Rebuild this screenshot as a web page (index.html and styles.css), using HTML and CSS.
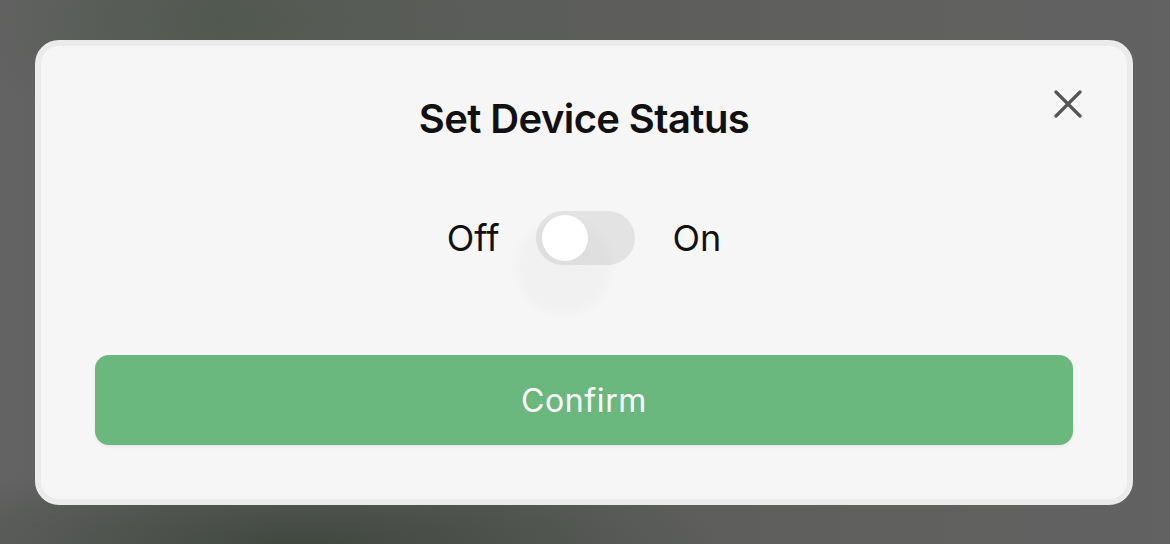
FILE: index.html
```html
<!DOCTYPE html>
<html>
<head lang="en">
    <meta charset="UTF-8">
    <title>Set Device Status</title>
    <link rel="stylesheet" href="styles.css">
</head>
<body>
<div id="backdrop">
    <div id="dialog">
        <span id="close">
            <svg width="28" height="28" viewBox="0 0 28 28">
                <path d="M2 2 L26 26 M26 2 L2 26" stroke="#555555" stroke-width="3.2" stroke-linecap="round" fill="none"/>
            </svg>
        </span>
        <h1 class="title">Set Device Status</h1>
        <div class="switch-row">
            <span class="label">Off</span>
            <span class="switch"><span class="knob"></span></span>
            <span class="label">On</span>
        </div>
        <a class="btn" href="#">Confirm</a>
    </div>
</div>
</body>
</html>
```

FILE: styles.css
```css
*{
    margin: 0;
    padding: 0;
    box-sizing: border-box;
}
a{
    text-decoration: none;
}
html,body{
    width: 1170px;
    height: 544px;
    overflow: hidden;
}
body{
    font-family: Inter, "Liberation Sans", sans-serif;
    background: #5f5f5f;
}
#backdrop{
    width: 1170px;
    height: 544px;
    padding: 40px 0 0 35px;
    background:
        radial-gradient(ellipse 260px 120px at 220px 20px, rgba(70,82,68,0.55), rgba(70,82,68,0) 100%),
        radial-gradient(ellipse 420px 90px at 300px 544px, rgba(55,64,54,0.75), rgba(55,64,54,0) 100%),
        linear-gradient(90deg, #636363 0%, #5b5d5a 40%, #5f5f5e 70%, #626262 100%);
}
#dialog{
    position: relative;
    width: 1098px;
    height: 465px;
    background: #f6f6f6;
    border: 6px solid #ebebeb;
    border-radius: 24px;
    padding: 0 48px;
    display: flex;
    flex-direction: column;
    align-items: center;
}
#close{
    position: absolute;
    right: 45px;
    top: 44px;
    width: 28px;
    height: 28px;
    cursor: pointer;
}
#close svg{
    display: block;
}
.title{
    margin-top: 49px;
    font-size: 40px;
    line-height: 48px;
    font-weight: 600;
    color: #111111;
    letter-spacing: -0.6px;
}
.switch-row{
    margin-top: 68px;
    display: flex;
    align-items: center;
    gap: 37px;
}
.label{
    font-size: 36px;
    line-height: 54px;
    color: #111111;
}
.switch{
    position: relative;
    width: 99px;
    height: 54px;
    background: #e3e3e3;
    border-radius: 27px;
    cursor: pointer;
}
.switch:before{
    content: "";
    position: absolute;
    left: -26px;
    top: 2px;
    width: 108px;
    height: 108px;
    border-radius: 50%;
    background: radial-gradient(circle, rgba(0,0,0,0.025) 0%, rgba(0,0,0,0.018) 55%, rgba(0,0,0,0) 70%);
    z-index: 0;
}
.knob{
    position: absolute;
    left: 6px;
    top: 4px;
    width: 46px;
    height: 46px;
    border-radius: 50%;
    background: #ffffff;
    z-index: 1;
}
.btn{
    margin-top: 90px;
    width: 978px;
    height: 90px;
    background: #6bb87f;
    border-radius: 14px;
    color: #ffffff;
    font-size: 32px;
    letter-spacing: 0.6px;
    display: flex;
    align-items: center;
    justify-content: center;
    box-shadow: 0 2px 3px rgba(0,0,0,0.06);
}
```
